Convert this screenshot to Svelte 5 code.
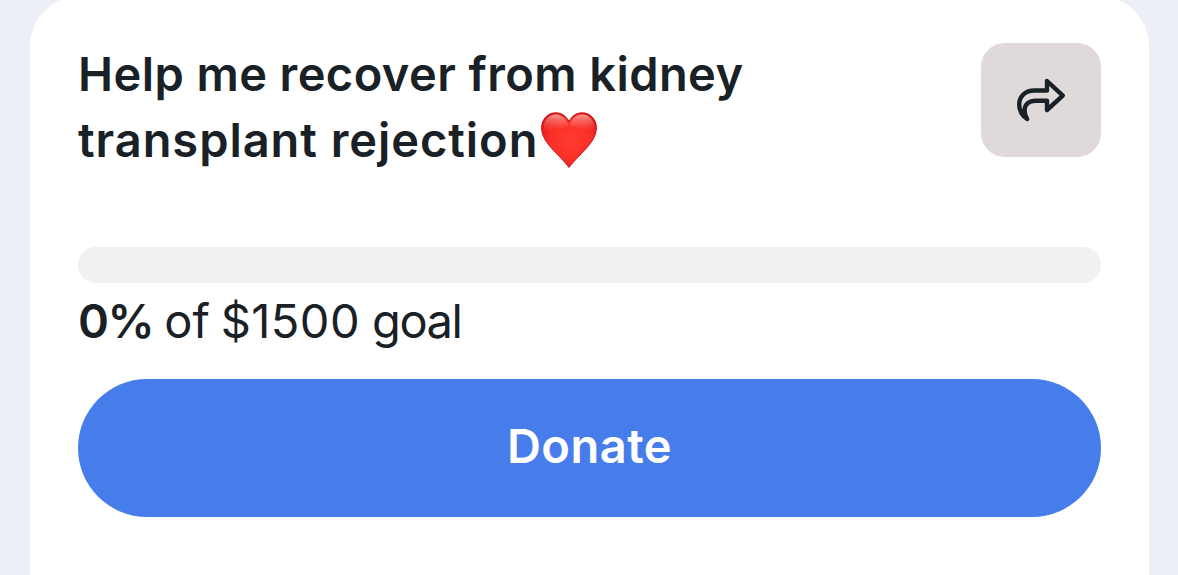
<script lang="ts">
  export let raised: number = 0;
  export let goal: number = 1500;

  $: percent = Math.min(100, Math.round((raised / goal) * 100));
</script>

<main class="page">
  <section class="card">
    <header class="card-header">
      <h1 class="title">
        <span class="line first">Help me recover from kidney</span>
        <span class="line second">
          <span>transplant rejection</span>
          <svg class="heart" viewBox="0 0 56 56" role="img" aria-label="Red heart">
            <defs>
              <radialGradient id="heart-fill" cx="0.52" cy="0.5" r="0.62">
                <stop offset="0" stop-color="#ff3c30" />
                <stop offset="0.6" stop-color="#fa2f27" />
                <stop offset="1" stop-color="#d9151a" />
              </radialGradient>
              <linearGradient id="heart-shine" x1="0" y1="0" x2="0" y2="1">
                <stop offset="0" stop-color="#ffc4bd" stop-opacity="0.75" />
                <stop offset="1" stop-color="#ff5a50" stop-opacity="0" />
              </linearGradient>
            </defs>
            <path
              d="M28 55.5C25 51 17 43.5 10 35.5C4 28.6 .6 22.5 .6 15.8C.6 7 7 .8 14.8 .8C20.6 .8 25.3 4 28 9.6C30.7 4 35.4 .8 41.2 .8C49 .8 55.4 7 55.4 15.8C55.4 22.5 52 28.6 46 35.5C39 43.5 31 51 28 55.5Z"
              fill="url(#heart-fill)"
              stroke="#c91419"
              stroke-width="1"
            />
            <path
              d="M2.8 15C3.2 7.5 8.2 2.5 14.8 2.5C20.5 2.5 25 6 27.3 13C22 17 9 16 2.8 20Z"
              fill="url(#heart-shine)"
            />
            <path
              d="M53.2 15C52.8 7.5 47.8 2.5 41.2 2.5C35.5 2.5 31 6 28.7 13C34 17 47 16 53.2 20Z"
              fill="url(#heart-shine)"
            />
          </svg>
        </span>
      </h1>

      <button class="share" aria-label="Share">
        <svg viewBox="0 0 50 44" fill="none" stroke="#192127" stroke-width="4.4" stroke-linecap="round" stroke-linejoin="round">
          <path d="M31 3L46.8 17.6L31 32V22.7H19.5C13 22.7 9 26.500 8.600 31.500C8.400 35 9.500 38 11.200 41C6 37.500 3.200 33 3.200 26.500C3.200 18 9.500 12.500 18.500 12.500H31Z" />
        </svg>
      </button>
    </header>

    <div class="progress">
      <div class="bar" style="width: {percent}%"></div>
    </div>

    <p class="status">
      <strong>{percent}%</strong>
      <span class="of">of</span>
      <span class="amount">${goal}</span>
      <span class="goal">goal</span>
    </p>

    <button class="donate"><span>Donate</span></button>
  </section>
</main>

<style>
  :global(body) {
    background: #eceff6;
  }

  .page {
    box-sizing: border-box;
    height: 575px;
    padding: 0 29px 0 30px;
    overflow: hidden;
    font-family: Inter, 'Open Sans', sans-serif;
    color: #192127;
  }

  .card {
    box-sizing: border-box;
    height: 650px;
    margin-top: -4px;
    padding: 45px 48px 0;
    border-radius: 50px;
    background: #fff;
  }

  .card-header {
    display: flex;
    justify-content: space-between;
    align-items: flex-start;
    height: 206px;
  }

  .title {
    margin: 0;
    font-size: 47px;
    font-weight: 600;
    line-height: 66px;
    white-space: nowrap;
  }

  .line {
    display: flex;
  }

  .first {
    letter-spacing: 0.42px;
  }

  .second {
    letter-spacing: 0.95px;
  }

  .heart {
    width: 56px;
    height: 56px;
    margin: 5px 0 0 3px;
  }

  button {
    padding: 0;
    border: none;
    font-family: inherit;
    cursor: pointer;
  }

  .share {
    display: flex;
    align-items: center;
    justify-content: center;
    width: 120px;
    height: 114px;
    margin-top: 2px;
    border-radius: 24px;
    background: #dfd9d9;
  }

  .share svg {
    width: 50px;
    height: 44px;
  }

  .progress {
    height: 36px;
    border-radius: 18px;
    background: #f1f1f1;
    overflow: hidden;
  }

  .bar {
    height: 100%;
    background: #477ceb;
  }

  .status {
    display: flex;
    gap: 11px;
    height: 96px;
    margin: 0;
    font-size: 47px;
    line-height: 75px;
    white-space: nowrap;
  }

  .status strong {
    font-weight: 600;
    letter-spacing: -1.5px;
  }

  .amount {
    letter-spacing: 0.4px;
  }

  .goal {
    margin-left: 1px;
    letter-spacing: -1.4px;
  }

  .donate {
    display: block;
    width: 100%;
    height: 138px;
    padding-bottom: 5px;
    border-radius: 69px;
    background: #477ceb;
    color: #fff;
    font-size: 47px;
    font-weight: 600;
    letter-spacing: 0.5px;
  }
</style>
